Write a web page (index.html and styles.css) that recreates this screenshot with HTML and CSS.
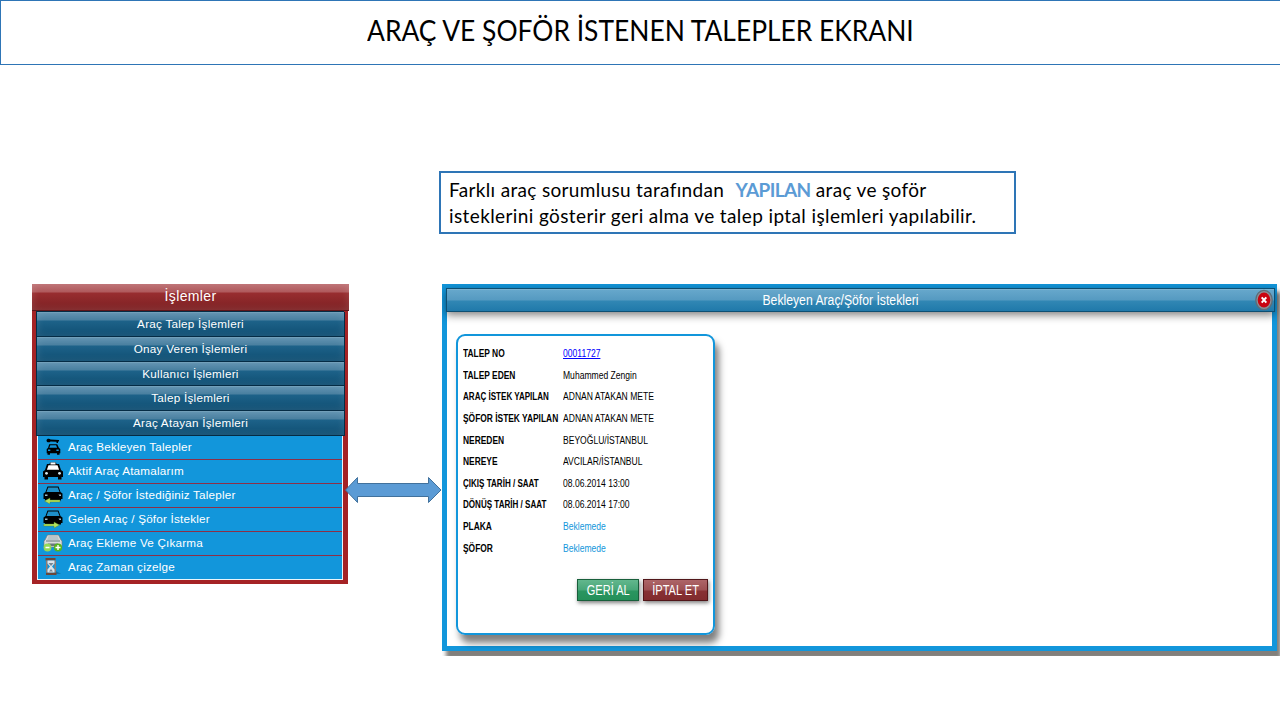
FILE: index.html
```html
<!DOCTYPE html>
<html lang="tr">
<head>
<meta charset="utf-8">
<title>Araç ve Şoför İstenen Talepler Ekranı</title>
<link rel="stylesheet" href="styles.css">
</head>
<body>
<header class="banner"><h1 class="banner-title"><span>ARAÇ VE ŞOFÖR İSTENEN TALEPLER EKRANI</span></h1></header>
<p class="note"><span class="note-line"><span>Farklı araç sorumlusu tarafından</span> &nbsp;<b>YAPILAN</b> <span>araç ve şoför</span></span><span class="note-line second">isteklerini gösterir geri alma ve talep iptal işlemleri yapılabilir.</span></p>
<main class="stage">
  <nav class="menu">
    <h2 class="menu-head"><span>İşlemler</span></h2>
    <div class="menu-body">
      <ul class="groups">
        <li><span>Araç Talep İşlemleri</span></li>
        <li><span>Onay Veren İşlemleri</span></li>
        <li><span>Kullanıcı İşlemleri</span></li>
        <li><span>Talep İşlemleri</span></li>
        <li><span>Araç Atayan İşlemleri</span></li>
      </ul>
      <ul class="actions">
        <li>
          <svg class="icon" viewBox="0 0 20 20"><path fill-rule="evenodd" d="M3.500 3.500C3.500 1.500 6.500 1 7.500 2.500L16 3v1.500h-1V6h-1.500V4.700L7.500 4.500C6.500 6 3.500 5.500 3.500 3.500zM6.200 7.200h8L16 11l1.300 1v4.200h-.8v1.600h-2.500v-1.600H7v1.600H4.500v-1.600h-.8V12L5 11zM7.300 8.300l-1 2.500h7.800l-1-2.500zM5 12.600V14h2.300v-1.400zm8.400 0V14h2.300v-1.400z"/></svg>
          <span>Araç Bekleyen Talepler</span></li>
        <li>
          <svg class="icon" viewBox="0 0 20 20"><path d="M7 1.500h6l.5 1.500h-7zM4 3h12l2 6 2 1.500v5.500h-1.500v2.500H15V16H5v2.500H1.500V16H0v-5.500L2 9z"/><path fill="#fff" d="M7.500 1.500h5v2h-5zM5.500 4.300h9l1.600 4.500H3.900z"/><circle cx="3.500" cy="12.300" r="1.400" fill="#d5e7ef"/><circle cx="16.500" cy="12.300" r="1.400" fill="#d5e7ef"/></svg>
          <span>Aktif Araç Atamalarım</span></li>
        <li>
          <svg class="icon" viewBox="0 0 20 20"><path d="M4.500 1.500h11L17.500 7 19.500 8.500V14H18v1.500H2V14H.5V8.500L2.500 7z"/><path fill="#1e8fc8" d="M5.200 2.400h9.600l1.700 4.600h-13z"/><path fill="#9bb8c5" d="M2 9.500h2.500V11H2zm13.500 0H18V11h-1.500z"/><path fill="#b5e35c" stroke="#547d27" stroke-width=".4" d="M1.500 16 7 13v2h10v2H7v2z"/></svg>
          <span>Araç / Şöfor İstediğiniz Talepler</span></li>
        <li>
          <svg class="icon" viewBox="0 0 20 20"><path d="M4.500 1.500h11L17.500 7 19.500 8.500V14H18v1.500H2V14H.5V8.500L2.500 7z"/><path fill="#1e8fc8" d="M5.200 2.400h9.600l1.700 4.600h-13z"/><path fill="#9bb8c5" d="M2 9.500h2.500V11H2zm13.500 0H18V11h-1.500z"/><path fill="#b5e35c" stroke="#547d27" stroke-width=".4" d="M16.500 16 11 13v2H.8v2H11v2z"/></svg>
          <span>Gelen Araç / Şöfor İstekler</span></li>
        <li>
          <svg class="icon" viewBox="0 0 20 20"><path fill="#d9dcdc" stroke="#777" stroke-width=".6" d="M4.500 2h11L18 7l1 1v6H1V8l1-1z"/><path fill="#b9c4c8" d="M5.500 3h9L16 7H4z"/><path fill="#69787c" d="M3 7.500h14v1H3zm2 3h10v2.500H5z"/><circle cx="4.500" cy="14.500" r="3.900" fill="#95d957"/><circle cx="15" cy="14.500" r="4.100" fill="#55b51c"/><path fill="#fff" d="M2.500 13.700h4v1.500h-4zm10 0h1.800V12h1.400v1.700h1.800v1.500h-1.800V17h-1.400v-1.800h-1.800z"/></svg>
          <span>Araç Ekleme Ve Çıkarma</span></li>
        <li>
          <svg class="icon" viewBox="0 0 20 20"><path fill="#0c75ae" d="M12 17h6l-5-3z"/><path fill="#6b473a" d="M2.500 1h10v2.500h-10zM3 15.500h10.500V18H3z"/><path fill="#9a7a6b" d="M3 3.500h1.500v12H3zm8.500 0H13v12h-1.500z"/><path fill="#dce5eb" d="M4.500 3.500h7v3L9 9.500l2.500 3v3h-7v-3l2.500-3-2.500-3z"/><path fill="#758796" d="M5.500 6h5L8 9zM6 14.500l2-2.500 2 2.500z"/></svg>
          <span>Araç Zaman çizelge</span></li>
      </ul>
    </div>
  </nav>
  <svg class="link-arrow" viewBox="0 0 98 28"><path d="M.5 14 12.500 1.500v6h71v-6L96 14 83.500 26.500v-6h-71v6z"/></svg>
  <section class="dialog">
    <div class="dialog-bar"><h2 class="dialog-title"><span>Bekleyen Araç/Şöfor İstekleri</span></h2>
      <svg class="close" viewBox="0 0 20 22"><ellipse cx="10" cy="11" rx="8.200" ry="9.700" fill="#8b8f95" stroke="#5d6d78" stroke-width="1.300"/><ellipse cx="10" cy="11" rx="6.300" ry="7.600" fill="#c90410"/><path d="m7.700 8.400 4.600 5.200m0-5.200-4.600 5.200" stroke="#fff" stroke-width="2"/></svg>
    </div>
    <article class="card">
      <dl class="fields">
        <dt><span>TALEP NO</span></dt><dd><span><a href="#">00011727</a></span></dd>
        <dt><span>TALEP EDEN</span></dt><dd><span>Muhammed Zengin</span></dd>
        <dt class="tight"><span>ARAÇ İSTEK YAPILAN</span></dt><dd><span>ADNAN ATAKAN METE</span></dd>
        <dt><span>ŞÖFOR İSTEK YAPILAN</span></dt><dd><span>ADNAN ATAKAN METE</span></dd>
        <dt><span>NEREDEN</span></dt><dd><span>BEYOĞLU/İSTANBUL</span></dd>
        <dt><span>NEREYE</span></dt><dd><span>AVCILAR/İSTANBUL</span></dd>
        <dt class="tight"><span>ÇIKIŞ TARİH / SAAT</span></dt><dd><span>08.06.2014 13:00</span></dd>
        <dt class="tight"><span>DÖNÜŞ TARİH / SAAT</span></dt><dd><span>08.06.2014 17:00</span></dd>
        <dt><span>PLAKA</span></dt><dd class="pending"><span>Beklemede</span></dd>
        <dt><span>ŞÖFOR</span></dt><dd class="pending"><span>Beklemede</span></dd>
      </dl>
      <div class="buttons"><button class="btn undo"><span>GERİ AL</span></button><button class="btn cancel"><span>İPTAL ET</span></button></div>
    </article>
  </section>
</main>
</body>
</html>
```
FILE: styles.css
```css
* { box-sizing: border-box; }
body { margin: 0; width: 1280px; height: 720px; overflow: hidden; background: #fff; font-family: "Liberation Sans", Arial, sans-serif; color: #000; }
h1, h2, ul, dl, dd, p { margin: 0; padding: 0; font-weight: normal; }
ul { list-style: none; }
span { display: inline-block; white-space: nowrap; }

.banner { height: 65px; border: 1px solid #2e75b6; border-right: 0; padding-top: 10px; text-align: center; }
.banner-title { font: 29px/38px Lato, "Open Sans", sans-serif; }
.banner-title span { transform: scaleX(.91); }
.note { width: 577px; height: 63px; margin: 106px 0 0 439px; border: 2px solid #2e75b6; padding: 4px 8px; font: 19px/26px Lato, "Open Sans", sans-serif; letter-spacing: .33px; }
.note-line { display: block; }
.note-line.second { letter-spacing: .39px; }
.note b { color: #5b9bd5; letter-spacing: -.6px; margin-left: 1px; }

.stage { display: flex; align-items: flex-start; margin: 50px 0 0 32px; }
.menu { width: 317px; flex: none; }
.menu-head { height: 27px; border-bottom: 1px solid #5d1518; background: linear-gradient(#bb6c6f 0, #b05a5d 8px, #982d30 9px, #7c2022 100%); box-shadow: inset 0 0 9px rgba(255,255,255,.15); color: #fff; font-size: 14px; letter-spacing: .35px; line-height: 25px; text-align: center; }
.menu-body { width: 316px; height: 273px; background: #a52325; padding: 0 4px 5px; }
.groups { border-top: 1px solid #052c45; }
.groups li { height: 24.800px; width: 309px; border: solid #052c45; border-width: 0 1px 1px; background: linear-gradient(#7ba6bf 0, #5b8fae 1px, #4a80a0 8px, #1d6289 9px, #0f4e72 100%); box-shadow: inset 0 0 8px rgba(255,255,255,.12); color: #fff; font-size: 11.700px; letter-spacing: .25px; line-height: 23.500px; text-align: center; }
.actions { margin: 0 1px; border: 1px solid #eaf6fc; border-top: 0; }
.actions li { display: flex; align-items: center; height: 24px; background: #1296db; border-bottom: 1px solid #8c3048; padding-left: 5px; gap: 5px; color: #fff; font-size: 11.700px; letter-spacing: .2px; }
.actions li span { padding-bottom: 1px; }
.actions li:last-child { height: 23px; border-bottom: 0; }
.icon { width: 20px; height: 20px; flex: none; }

.link-arrow { width: 98px; height: 28px; margin: 192px -1px 0 -4px; flex: none; position: relative; z-index: 1; fill: #5b9bd5; stroke: #41719c; stroke-width: 1; }

.dialog { width: 835px; height: 367px; flex: none; border: 5px solid #1296db; border-top-width: 4px; box-shadow: 4px 8px 4px #827f7b; clip-path: inset(0 -3px -5px 0); background: #fff; }
.dialog-bar { display: flex; align-items: center; height: 24px; margin: 0 -3px 0 -1px; border: 1px solid #0d4f73; background: linear-gradient(#8fbdd5 0, #66a7cb 1px, #559ac1 11px, #3187b4 12px, #2079aa 100%); box-shadow: 0 3px 8px rgba(0,0,0,.5); color: #fff; }
.dialog-title { flex: 1; padding-right: 21px; font-size: 14px; text-align: center; }
.dialog-title span { transform: scaleX(.872); }
.close { width: 20px; height: 22px; flex: none; }
.card { width: 259px; height: 301px; margin: 22px 0 0 9px; padding: 7px 5px; border: 2px solid #1296db; border-radius: 9px; box-shadow: 4px 8px 7px rgba(0,0,0,.5); }
.fields { display: grid; grid-template-columns: 100px 1fr; grid-auto-rows: 21.650px; font-size: 10px; line-height: 21px; }
.fields span { transform: scaleX(.855); transform-origin: left; }
.fields dt { font-weight: bold; }
.fields dt span { transform: scaleX(.84); }
.fields .tight span { transform: scaleX(.805); }
.fields dt, .fields dd { width: 100px; }
.fields a { color: #00f; }
.pending { color: #1296db; }
.buttons { display: flex; justify-content: flex-end; gap: 4px; margin-top: 20px; }
.btn { height: 22px; padding: 0; border: 1px solid #185f3b; font: 14px "Liberation Sans", Arial, sans-serif; color: #fff; box-shadow: 1px 2px 4px rgba(0,0,0,.5); }
.btn span { transform: scaleX(.79); margin: 0 -4px; }
.undo { width: 62px; background: linear-gradient(#62b78d 0, #48a678 10px, #2a9560 11px, #249059 100%); }
.cancel { width: 65px; border-color: #511619; background: linear-gradient(#ad6568 0, #9d5053 10px, #873033 11px, #812b2e 100%); }
```
